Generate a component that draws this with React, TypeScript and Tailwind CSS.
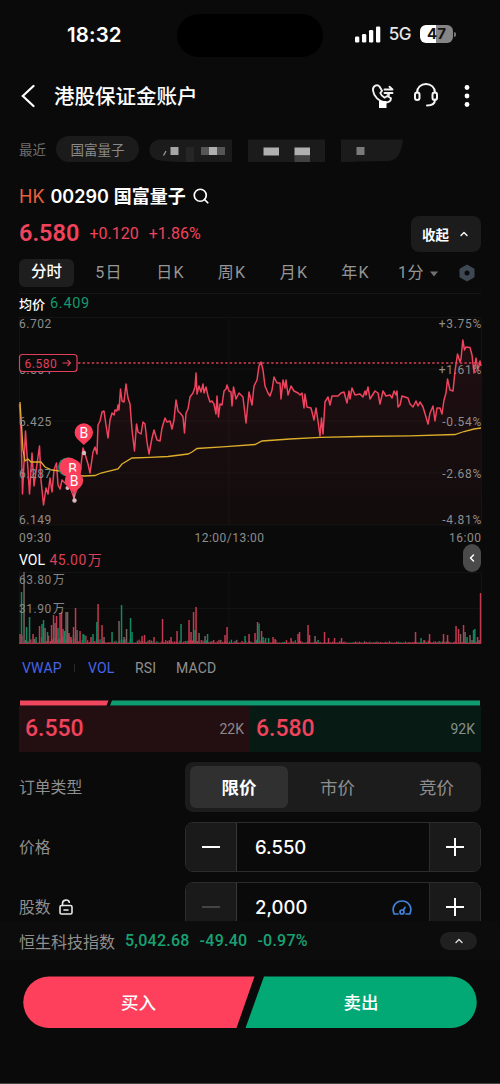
import React from 'react';
import { ChevronLeft, ChevronUp, Search } from 'lucide-react';

type Point = [number, number];

const PRICE: Point[] = [
  [19.5, 404], [21, 430], [22.5, 494], [25.5, 431], [28, 470], [29.5, 494], [32, 453], [34, 486], [37, 464],
  [39.5, 446], [41, 480], [43.5, 505], [46, 488], [48, 494], [50, 478], [52, 492], [54, 470], [56.5, 463],
  [58, 485], [60, 489], [62, 480], [66, 484], [70, 487], [74, 498], [79, 482], [83, 448], [85, 454], [88, 464],
  [90, 473], [93, 452], [95, 447], [97, 454], [98, 425], [100, 421], [102, 412], [104, 411], [106, 425],
  [108, 438], [110, 420], [112, 413], [114, 415], [115, 410], [117, 411], [118, 405], [119, 410], [120.5, 389],
  [122, 401], [124, 402], [126, 384], [128, 398], [130, 404], [132, 430], [134.5, 451], [136.5, 424], [138, 432],
  [141, 434], [143, 422], [145, 424], [147, 442], [149, 454], [152, 438], [154, 430], [157, 440], [160, 441],
  [162, 428], [165, 418], [167, 422], [170, 421], [172, 429], [174, 420], [176, 400], [178, 411], [181, 414],
  [183, 417], [184.5, 433], [186, 413], [188, 409], [190, 397], [193, 393], [195, 387], [196, 373], [197, 394],
  [199, 386], [201, 392], [203, 384], [204, 393], [206, 387], [208, 396], [210, 402], [212, 401], [214, 404],
  [216, 414], [217, 396], [218.5, 417], [220, 404], [222, 405], [224, 391], [226, 389], [227, 385], [229, 391],
  [231, 392], [232, 406], [233.5, 387], [236, 399], [239, 393], [243, 397], [246, 423], [249, 392], [252, 405],
  [254, 386], [257, 380], [259, 366], [261, 362], [263, 370], [265, 386], [268, 393], [270, 396], [272, 390],
  [274, 377], [277, 383], [280, 383], [281, 399], [283, 380], [285, 388], [286, 380], [288, 395], [291, 386],
  [294, 391], [298, 393], [300, 395], [302, 393], [304, 408], [305, 394], [307, 407], [311, 408], [314, 420],
  [316, 408], [318, 421], [320, 436], [321.5, 418], [323, 434], [325, 402], [328, 397], [330, 405], [332, 396],
  [338, 396], [341, 393], [344, 392], [347, 403], [349, 391], [350, 399], [352, 388], [355, 395], [360, 394],
  [363, 397], [365, 391], [366, 395], [368, 387], [370, 399], [375, 391], [378, 393], [380, 404], [383, 391],
  [386, 396], [390, 395], [392, 398], [394, 391], [396, 395], [397, 391], [398, 407], [400, 405], [402, 396],
  [408, 398], [410, 404], [413, 407], [416, 401], [418, 406], [420, 402], [423, 407], [426, 417], [428, 424],
  [430, 413], [433, 406], [435, 421], [437, 408], [440, 408], [442, 414], [444, 400], [446, 393], [447.5, 379],
  [450, 390], [453, 391], [455, 371], [457.5, 354], [460, 362], [461, 359], [462.8, 340], [464.5, 350],
  [466, 347], [470, 347.5], [472, 355], [474, 373], [476, 358], [478, 370], [480, 361], [481, 366],
];

const AVERAGE: Point[] = [
  [20, 402], [21.5, 425], [23, 450], [25, 461], [28, 459], [31, 462], [41, 462], [45, 467], [52, 470], [60, 471],
  [75, 475], [84, 476], [95, 475.5], [101, 473], [118, 469], [122, 464], [132, 458], [150, 457.3], [168, 456.5],
  [188, 454], [192, 452], [197, 448.5], [226, 446.7], [255, 444.5], [262, 441], [290, 439], [320, 437.3],
  [360, 436.5], [410, 435.8], [455, 434.5], [464, 431.5], [474, 429], [481, 428],
];

// x, top and colour of the tall volume bars
const VOLUME: [number, number, 'r' | 'g' | 'x'][] = [
  [20, 634, 'r'], [21.5, 592, 'g'], [24, 572, 'x'], [26.5, 627, 'g'], [29.5, 617, 'g'], [33, 634, 'r'],
  [36, 637, 'g'], [39.5, 626, 'r'], [42, 624, 'g'], [43.5, 620, 'g'], [45, 628, 'x'], [47.5, 632, 'g'],
  [51.5, 625, 'r'], [53.5, 615, 'r'], [55, 623, 'x'], [56.5, 616, 'r'], [58, 628, 'g'], [60, 613, 'r'],
  [61.5, 612, 'r'], [63, 629, 'r'], [64.5, 631, 'g'], [66, 612, 'x'], [67.5, 612, 'x'], [69, 633, 'r'],
  [71, 637, 'r'], [73.5, 627, 'r'], [75.5, 608, 'r'], [77, 630, 'x'], [80, 631, 'r'], [83, 634, 'g'],
  [91, 637, 'r'], [93, 634, 'g'], [96.8, 622, 'g'], [98, 604, 'r'], [102, 625, 'r'], [104, 637, 'x'],
  [112, 632, 'g'], [119, 621, 'x'], [121.5, 605, 'g'], [124, 637, 'x'], [126.5, 629, 'x'], [130.5, 618, 'g'],
  [132, 632, 'g'], [142, 636, 'r'], [144.5, 635, 'r'], [154, 637, 'r'], [162.5, 619, 'r'], [171, 637, 'r'],
  [177, 631, 'r'], [181, 624, 'g'], [189, 620, 'r'], [191, 632, 'r'], [193.5, 612, 'r'], [195, 630, 'g'],
  [196, 607, 'r'], [199, 633, 'x'], [205, 636, 'x'], [207.5, 634, 'g'], [225, 635, 'r'], [227, 627, 'r'],
  [245, 636, 'g'], [249, 634, 'r'], [255, 633, 'r'], [257.5, 622, 'r'], [259, 623.5, 'g'], [261.5, 631, 'r'],
  [263, 637, 'g'], [265.5, 638, 'g'], [268.5, 638, 'g'], [273, 637, 'r'], [275, 639, 'r'], [291, 638, 'r'],
  [298, 634, 'r'], [299.5, 632, 'r'], [308, 625, 'r'], [309.5, 635, 'r'], [315, 636, 'x'], [318, 640, 'g'],
  [324.5, 632, 'r'], [328.5, 638, 'r'], [334.5, 638, 'r'], [341.5, 638, 'r'], [415.5, 632, 'r'], [421, 638, 'g'],
  [424, 640, 'r'], [429.5, 634, 'r'], [443.5, 634, 'r'], [447.5, 635, 'r'], [456, 626, 'r'], [458.5, 629, 'r'],
  [460.5, 634, 'x'], [463.5, 625, 'r'], [465, 632, 'x'], [467, 637, 'g'], [470, 635, 'x'], [473.5, 630, 'g'],
  [474.8, 629, 'g'], [477.5, 637, 'r'], [479, 640, 'x'], [480.5, 593, 'r'],
];

const BAR_COLOR = { r: '#c23a50', g: '#128960', x: '#75635f' };

const toLine = (pts: Point[]) => pts.map(p => p.join(',')).join(' ');

// low trading minutes between the spikes
const MINOR = Array.from({ length: 260 }, (_, i) => {
  const x = 19.5 + i * 1.775;
  const n = Math.abs(Math.sin(i * 12.9898) * 43758.5453) % 1;
  const busy = x < 90 ? 8 : x < 140 ? 5 : x < 300 ? 2.8 : x > 420 ? 2.5 : 1.3;
  return { x, h: 1 + n * n * busy, c: BAR_COLOR[n * 10 % 1 > 0.75 ? 'g' : n * 10 % 1 > 0.6 ? 'x' : 'r'] };
});

function BuyMarker({ x, y }: { x: number; y: number }) {
  return (
    <g>
      <path d={`M${x} ${y + 12.5}l-6.5-6a9.2 9.2 0 1 1 13 0z`} fill="#fb3f5b" />
      <text x={x} y={y + 5} textAnchor="middle" fontSize="14" fill="#fff" className="font-['Roboto',sans-serif]">B</text>
    </g>
  );
}

function PriceChart() {
  return (
    <svg width="500" height="234" viewBox="0 314 500 234" className="block shrink-0 font-['Roboto',sans-serif]">
      <defs>
        <linearGradient id="area" x1="0" y1="0" x2="0" y2="1">
          <stop offset="0" stopColor="#ff4059" stopOpacity="0.09" />
          <stop offset="1" stopColor="#ff4059" stopOpacity="0.03" />
        </linearGradient>
      </defs>
      <g stroke="#131313" strokeWidth="1">
        {[317.5, 369, 421, 473, 525].map(y => <path key={y} d={`M19 ${y}H481`} />)}
        <path d="M19.5 317V525M229 317V525M481.5 317V525" />
      </g>
      <polygon points={`19,525 ${toLine(PRICE)} 481,525`} fill="url(#area)" />
      <path d="M78 363H481" stroke="#d83d56" strokeWidth="1.3" strokeDasharray="2.4 2.2" />
      <polyline points={toLine(PRICE)} fill="none" stroke="#f0435f" strokeWidth="1.5" strokeLinejoin="round" />
      <polyline points={toLine(AVERAGE)} fill="none" stroke="#dcae2c" strokeWidth="1.3" />
      <g fontSize="12" fill="#8d8d8d" letterSpacing="0.5">
        <text x="19" y="328">6.702</text>
        <text x="19" y="373.500">6.564</text>
        <text x="19" y="425.500">6.425</text>
        <text x="19" y="478">6.287</text>
        <text x="19" y="523.500">6.149</text>
        <text x="19" y="541.500">09:30</text>
        <text x="229.500" y="541.500" textAnchor="middle">12:00/13:00</text>
        <g textAnchor="end">
          <text x="482" y="328" letterSpacing="0.7">+3.75%</text>
          <text x="482" y="373.500" letterSpacing="0.7">+1.61%</text>
          <text x="482" y="425.500" letterSpacing="0.7">-0.54%</text>
          <text x="482" y="478" letterSpacing="0.7">-2.68%</text>
          <text x="482" y="523.500" letterSpacing="0.7">-4.81%</text>
          <text x="481.500" y="541.500">16:00</text>
        </g>
      </g>
      <rect x="19.500" y="354.500" width="57.500" height="17" rx="3" fill="#0a0a0a" stroke="#e0405a" strokeWidth="1.200" />
      <text x="24.500" y="367.500" fontSize="12" letterSpacing="0.5" fill="#e0405a">6.580</text>
      <path d="M62.500 363h8M67.500 360l3 3-3 3" fill="none" stroke="#e0405a" strokeWidth="1.100" />
      <circle cx="84" cy="453" r="2.200" fill="#d9b9be" />
      <circle cx="67.500" cy="488" r="2" fill="#d9b9be" />
      <path d="M74 491v9" stroke="#d9b9be" />
      <circle cx="74.500" cy="500.500" r="2.200" fill="#d9b9be" />
      <BuyMarker x={83.8} y={432.5} />
      <circle cx="67.500" cy="467" r="9.500" fill="#178b69" />
      <circle cx="69" cy="467" r="9.500" fill="#fb3f5b" />
      <BuyMarker x={72.5} y={468.5} />
      <BuyMarker x={74} y={480.5} />
    </svg>
  );
}

function VolumeChart() {
  return (
    <svg width="500" height="76" viewBox="0 570 500 76" className="block shrink-0 font-['Roboto','Noto_Sans_CJK_SC',sans-serif]">
      <path d="M19 572.500H481M19 608.500H481M19.500 572V644M229 572V644M481.500 572V644" stroke="#131313" fill="none" />
      {MINOR.map(b => <rect key={b.x} x={b.x} y={643.5 - b.h} width="1.400" height={b.h} fill={b.c} />)}
      {VOLUME.map(([x, y, c]) => <rect key={x} x={x - 0.7} y={y} width="1.500" height={643.5 - y} fill={BAR_COLOR[c]} />)}
      <path d="M19 643.500H481" stroke="#a8354a" />
      <g fontSize="12" fill="#858585" letterSpacing="0.5">
        <text x="19" y="583.500">63.80<tspan dx="1">万</tspan></text>
        <text x="19" y="612.500">31.90<tspan dx="1">万</tspan></text>
      </g>
    </svg>
  );
}

function StatusBar() {
  return (
    <div className="flex h-[70px] shrink-0 items-center pl-[67px] pr-[44px]">
      <span className="w-[110px] font-['Inter',sans-serif] text-[20.500px] font-semibold tracking-[0.1px]">18:32</span>
      <div className="h-[43px] w-[146px] rounded-full bg-black" />
      <svg width="26" height="17" viewBox="0 0 26 17" fill="#fff" className="ml-8 -mt-0.5">
        <rect x="0" y="10.500" width="4.300" height="6" rx="1.300" />
        <rect x="7" y="8" width="4.300" height="8.500" rx="1.300" />
        <rect x="14" y="4" width="4.300" height="12.500" rx="1.300" />
        <rect x="21" y="0.500" width="4.300" height="16" rx="1.300" />
      </svg>
      <span className="ml-2 font-['Inter',sans-serif] text-[17px] font-medium tracking-[-0.5px] text-[#e6e6e6]">5G</span>
      <div className="ml-[9px] flex h-[18px] w-[33px] -mt-0.5 shrink-0 items-center justify-center rounded-[6px] bg-linear-to-r from-white from-47% to-[#858585] to-47% font-['Inter',sans-serif] text-[15px] font-bold text-[#151515]">
        47
      </div>
      <div className="ml-px h-[5px] w-[2px] -mt-0.5 shrink-0 rounded-r-full bg-[#777]" />
    </div>
  );
}

function Header() {
  return (
    <header className="flex h-[52px] shrink-0 items-center pl-[21px] pr-[30px]">
      <svg width="14" height="24" viewBox="0 0 14 24" fill="none" stroke="#fff" strokeWidth="2.200" strokeLinecap="round">
        <path d="M12.500 2L1.800 12l10.700 10" />
      </svg>
      <h1 className="ml-[19px] flex-1 pb-px text-[20.500px] font-medium">港股保证金账户</h1>
      <svg width="24" height="26" viewBox="0 0 24 26" fill="none" stroke="#f2f2f2" strokeWidth="1.900" strokeLinecap="round" strokeLinejoin="round">
        <path d="M8.500 3.500C6.500 1 1.500 2.500 2 7.500c.7 6 6 11 12 12 3.500.5 6-1.500 6-4.200l-3.700-2.300-2.800 1.700c-2-1-3.400-2.700-4.200-4.700L11 7.800 8.500 3.500z" />
        <path d="M13.500 6.500h8l-3-2.800M21.500 10h-8M16 10l2 2" />
        <rect x="8" y="18" width="7.500" height="7" fill="#fff" stroke="none" />
      </svg>
      <svg width="26" height="26" viewBox="0 0 26 26" fill="none" stroke="#f5f5f5" strokeWidth="2" strokeLinecap="round" className="-mt-0.5 ml-[18px]">
        <path d="M4 10.500C4 5.500 8 2 13 2s9 3.500 9 8.500M22 17.500c0 4-3.500 6-8 6" />
        <rect x="2" y="10.500" width="4.500" height="7.500" rx="2.200" />
        <rect x="19.500" y="10.500" width="4.500" height="7.500" rx="2.200" />
      </svg>
      <svg width="6" height="24" viewBox="0 0 6 24" fill="#fff" className="ml-[25px]">
        <circle cx="3" cy="3.500" r="2.400" />
        <circle cx="3" cy="12" r="2.400" />
        <circle cx="3" cy="20.500" r="2.400" />
      </svg>
    </header>
  );
}

function RecentRow() {
  return (
    <div className="flex h-[54px] shrink-0 items-center pl-[19px] text-[14px] text-[#6f6f6f]">
      <span className="w-[37px] text-[13.500px]">最近</span>
      <span className="flex h-[26px] w-[83px] items-center justify-center rounded-full bg-[#1b1b1b] text-[13.500px] text-[#8a8a8a]">国富量子</span>
      <svg width="256" height="26" viewBox="148 136 256 26" className="ml-[9px]">
        <path d="M160 139.500h72v23h-50l-22-2c-14-1-14-20 0-21z" fill="#1b1b1b" />
        <path d="M248 139.500h77v23h-77zM341 139.500h62c-2 14-5 20-14 21.500l-28 .5-20 1z" fill="#1b1b1b" />
        <path d="M166 151l-2.500 4.500" stroke="#999" strokeWidth="1.300" />
        <path d="M170.500 147h8v8h-8z" fill="#a6a6a6" />
        <path d="M186 147h8v15h-8z" fill="#262626" />
        <path d="M201 147h8v8h-8zM217 147h8v8h-8z" fill="#555" />
        <path d="M209 147h8v8h-8zM263.500 147.500h15.500v8h-15.500zM294.500 147.500h15.500v8h-15.500z" fill="#b0b0b0" />
        <path d="M294.500 155.500h15.500v7h-15.500z" fill="#414141" />
        <path d="M356.500 147h8v8h-8z" fill="#7a7a7a" />
      </svg>
    </div>
  );
}

function Quote() {
  return (
    <section className="shrink-0 px-[19px]">
      <div className="flex h-10 items-center text-[18px] font-bold">
        <span className="font-['Inter',sans-serif] font-normal text-[#e9603f]">HK</span>
        <span className="ml-[6px] font-['Inter',sans-serif] font-semibold">00290</span>
        <span className="ml-[5px] pb-px">国富量子</span>
        <Search className="ml-[6px] h-[18px] w-[18px]" strokeWidth={2.3} />
      </div>
      <div className="flex h-9 items-center font-['Roboto',sans-serif] font-medium text-[#f0435c]">
        <span className="text-[23.500px] font-semibold">6.580</span>
        <span className="ml-[10px] text-[16px] font-normal">+0.120</span>
        <span className="ml-[10px] text-[16px] font-normal">+1.86%</span>
        <button className="ml-auto flex h-9 w-[70px] items-center justify-center gap-[9px] rounded-lg bg-[#1c1c1c] font-['Noto_Sans_CJK_SC',sans-serif] text-[13.500px] font-bold text-white">
          收起
          <ChevronUp className="h-3 w-3" strokeWidth={2.8} />
        </button>
      </div>
    </section>
  );
}

const PERIODS = [
  { label: '5日', box: 'w-[62px]' },
  { label: '日K', box: 'w-[61px]' },
  { label: '周K', box: 'w-[62px]' },
  { label: '月K', box: 'w-[62px]' },
  { label: '年K', box: 'w-[61px]' },
];

function PeriodTabs() {
  return (
    <div className="mx-[19px] flex h-[42px] shrink-0 items-center border-b border-[#161616] font-['Roboto','Noto_Sans_CJK_SC',sans-serif] text-[16px] text-[#969696]">
      <span className="flex h-7 w-[55px] items-center justify-center rounded-md bg-[#1e1e1e] text-[15.500px] font-medium text-white">分时</span>
      <div className="ml-[4px] flex">
        {PERIODS.map(p => (
          <span key={p.label} className={`text-center tracking-[1.2px] ${p.box}`}>{p.label}</span>
        ))}
      </div>
      <span className="ml-[12px] tracking-[0.5px]">1分</span>
      <svg width="8" height="6" viewBox="0 0 8 6" className="ml-[6px] mt-0.5"><path d="M0 .5h8L4 5.500z" fill="#707070" /></svg>
      <svg width="16" height="18" viewBox="0 0 16 18" className="ml-auto mr-[6px]">
        <path d="M8 1l7 4v8l-7 4-7-4V5z" fill="#3e4853" stroke="#3e4853" strokeLinejoin="round" />
        <circle cx="8" cy="9" r="2.500" fill="#0a0a0a" />
      </svg>
    </div>
  );
}

function Depth() {
  return (
    <section className="mx-[19px] shrink-0 font-['Roboto',sans-serif]">
      <svg width="462" height="6" viewBox="0 0 462 6" className="block">
        <path d="M1 0.500h88.500l-2 5H1z" fill="#f0465e" />
        <path d="M93 0.500h368v5H91z" fill="#109b70" />
      </svg>
      <div className="flex h-[46px] text-[23px] font-medium text-[#f0435c]">
        <div className="flex w-[231px] shrink-0 items-center justify-between bg-[#230f12] pl-1.5 pr-[6px]">
          6.550<span className="text-[14px] font-normal text-[#8f8688]">22K</span>
        </div>
        <div className="flex flex-1 items-center justify-between bg-[#081a14] pl-1.5 pr-[6px]">
          6.580<span className="text-[14px] font-normal text-[#83908a]">92K</span>
        </div>
      </div>
    </section>
  );
}

function Stepper({ value, minusOff, children }: { value: string; minusOff?: boolean; children?: React.ReactNode }) {
  return (
    <div className="flex h-[50px] w-[296px] overflow-hidden rounded-lg border border-[#2c2c2c]">
      <button className="flex w-[51px] items-center justify-center border-r border-[#393939] bg-[#1a1a1a]">
        <span className={`h-0.5 w-[18px] ${minusOff ? 'bg-[#444]' : 'bg-white'}`} />
      </button>
      <div className="flex flex-1 items-center justify-between pl-[18px] pr-[17px] pt-0.5 font-['Inter',sans-serif] text-[18.500px] font-medium">
        {value}
        {children}
      </div>
      <button className="flex w-[51px] items-center justify-center border-l border-[#2c2c2c] bg-[#1a1a1a]">
        <svg width="18" height="18" viewBox="0 0 18 18" stroke="#fff" strokeWidth="2"><path d="M0 9h18M9 0v18" /></svg>
      </button>
    </div>
  );
}

function OrderForm() {
  return (
    <section className="mt-[10px] flex h-[159px] shrink-0 flex-col gap-[10px] overflow-hidden px-[19px] text-[15.800px] text-[#8f8f8f]">
      <div className="flex shrink-0 items-center justify-between">
        <span>订单类型</span>
        <div className="flex h-[50px] w-[296px] items-center rounded-lg bg-[#1c1c1c] pl-[5px] text-[17.500px]">
          <span className="flex h-[42px] w-[98px] shrink-0 items-center justify-center rounded-md bg-[#303030] font-bold text-white">限价</span>
          <span className="w-[99px] shrink-0 text-center">市价</span>
          <span className="w-[99px] shrink-0 text-center">竞价</span>
        </div>
      </div>
      <div className="flex shrink-0 items-center justify-between">
        <span>价格</span>
        <div className="text-white"><Stepper value="6.550" /></div>
      </div>
      <div className="flex shrink-0 items-center justify-between">
        <span className="flex items-center gap-2">
          股数
          <svg width="14" height="16" viewBox="0 0 14 16" fill="none" stroke="#e8e8e8" strokeWidth="1.600" strokeLinejoin="round" strokeLinecap="round">
            <rect x="1" y="6.500" width="12" height="8.500" rx="1.500" />
            <path d="M3.500 6.500V4.500c0-4.200 6-4.500 6.800-1.200M5 11h4" />
          </svg>
        </span>
        <div className="text-white">
          <Stepper value="2,000" minusOff>
            <svg width="20" height="16" viewBox="0 0 20 16" fill="none" stroke="#3f83dc" strokeWidth="1.700" strokeLinecap="round" strokeLinejoin="round">
              <path d="M6 14H2.300C-1 7.500 3.500 1 10 1s11 6.500 7.700 13H14" />
              <circle cx="10" cy="12" r="2" />
              <path d="M11.200 10.300L13 7.500" />
            </svg>
          </Stepper>
        </div>
      </div>
    </section>
  );
}

function IndexBar() {
  return (
    <div className="flex h-[39px] shrink-0 items-center bg-[#0c0c0c] pl-[19px] pr-[23px] font-['Roboto',sans-serif] text-[16px] tracking-[0.25px] text-[#18a274]">
      <span className="font-['Noto_Sans_CJK_SC',sans-serif] tracking-normal text-[#8f8f8f]">恒生科技指数</span>
      <span className="ml-[10px] font-medium">5,042.68</span>
      <span className="ml-[10px] font-medium">-49.40</span>
      <span className="ml-[10px] font-medium">-0.97%</span>
      <button className="ml-auto flex h-[18px] w-[37px] items-center justify-center rounded-full bg-[#202020] text-[#ddd]">
        <ChevronUp className="h-3 w-3" strokeWidth={2.8} />
      </button>
    </div>
  );
}

export default function App() {
  return (
    <div className="flex h-[1084px] w-[500px] flex-col overflow-hidden border-b border-[#444] bg-[#0a0a0a] font-['Noto_Sans_CJK_SC',sans-serif] text-white">
      <StatusBar />
      <Header />
      <RecentRow />
      <Quote />
      <PeriodTabs />
      <div className="flex h-5 shrink-0 items-center gap-[5px] pl-[19px] text-[13px] font-medium">
        均价
        <span className="font-['Roboto',sans-serif] text-[14.500px] font-normal tracking-[0.7px] text-[#12996d]">6.409</span>
      </div>
      <PriceChart />
      <div className="flex h-[22px] shrink-0 items-center justify-between pl-[19px] pr-[19px] pt-0.5 font-['Roboto','Noto_Sans_CJK_SC',sans-serif] text-[14px]">
        <span>VOL <span className="ml-px tracking-[0.4px] text-[#dd3f58]">45.00<span className="ml-px">万</span></span></span>
        <button className="relative -top-0.5 flex h-7 w-[18px] items-center justify-center rounded-full bg-[#4a4a4a]">
          <ChevronLeft className="h-3 w-3" strokeWidth={3} />
        </button>
      </div>
      <VolumeChart />
      <div className="flex h-[54px] shrink-0 items-center pb-[10px] pl-[22px] font-['Roboto',sans-serif] text-[14px] tracking-[0.2px] text-[#909090]">
        <span className="w-[52px] text-[#4964e6]">VWAP</span>
        <span className="h-2 w-px bg-[#2a2a2a]" />
        <span className="ml-[13px] w-[47px] text-[#4964e6]">VOL</span>
        <span className="w-[41px]">RSI</span>
        <span>MACD</span>
      </div>
      <Depth />
      <OrderForm />
      <IndexBar />
      <div className="shrink-0 px-[23px] pt-4">
        <div className="relative h-[52px]">
          <svg width="454" height="52" viewBox="0 0 454 52" className="absolute inset-0">
            <path d="M26 .500H231.500L213.500 52H26A25.700 25.700 0 0 1 26 .500z" fill="#ff405c" />
            <path d="M241 .500H428A25.700 25.700 0 0 1 428 52H222.500z" fill="#03a975" />
          </svg>
          <div className="relative flex h-full items-center text-[17.500px] font-medium">
            <button className="w-[231px]">买入</button>
            <button className="ml-[-9px] w-[232px] text-center">卖出</button>
          </div>
        </div>
      </div>
    </div>
  );
}
